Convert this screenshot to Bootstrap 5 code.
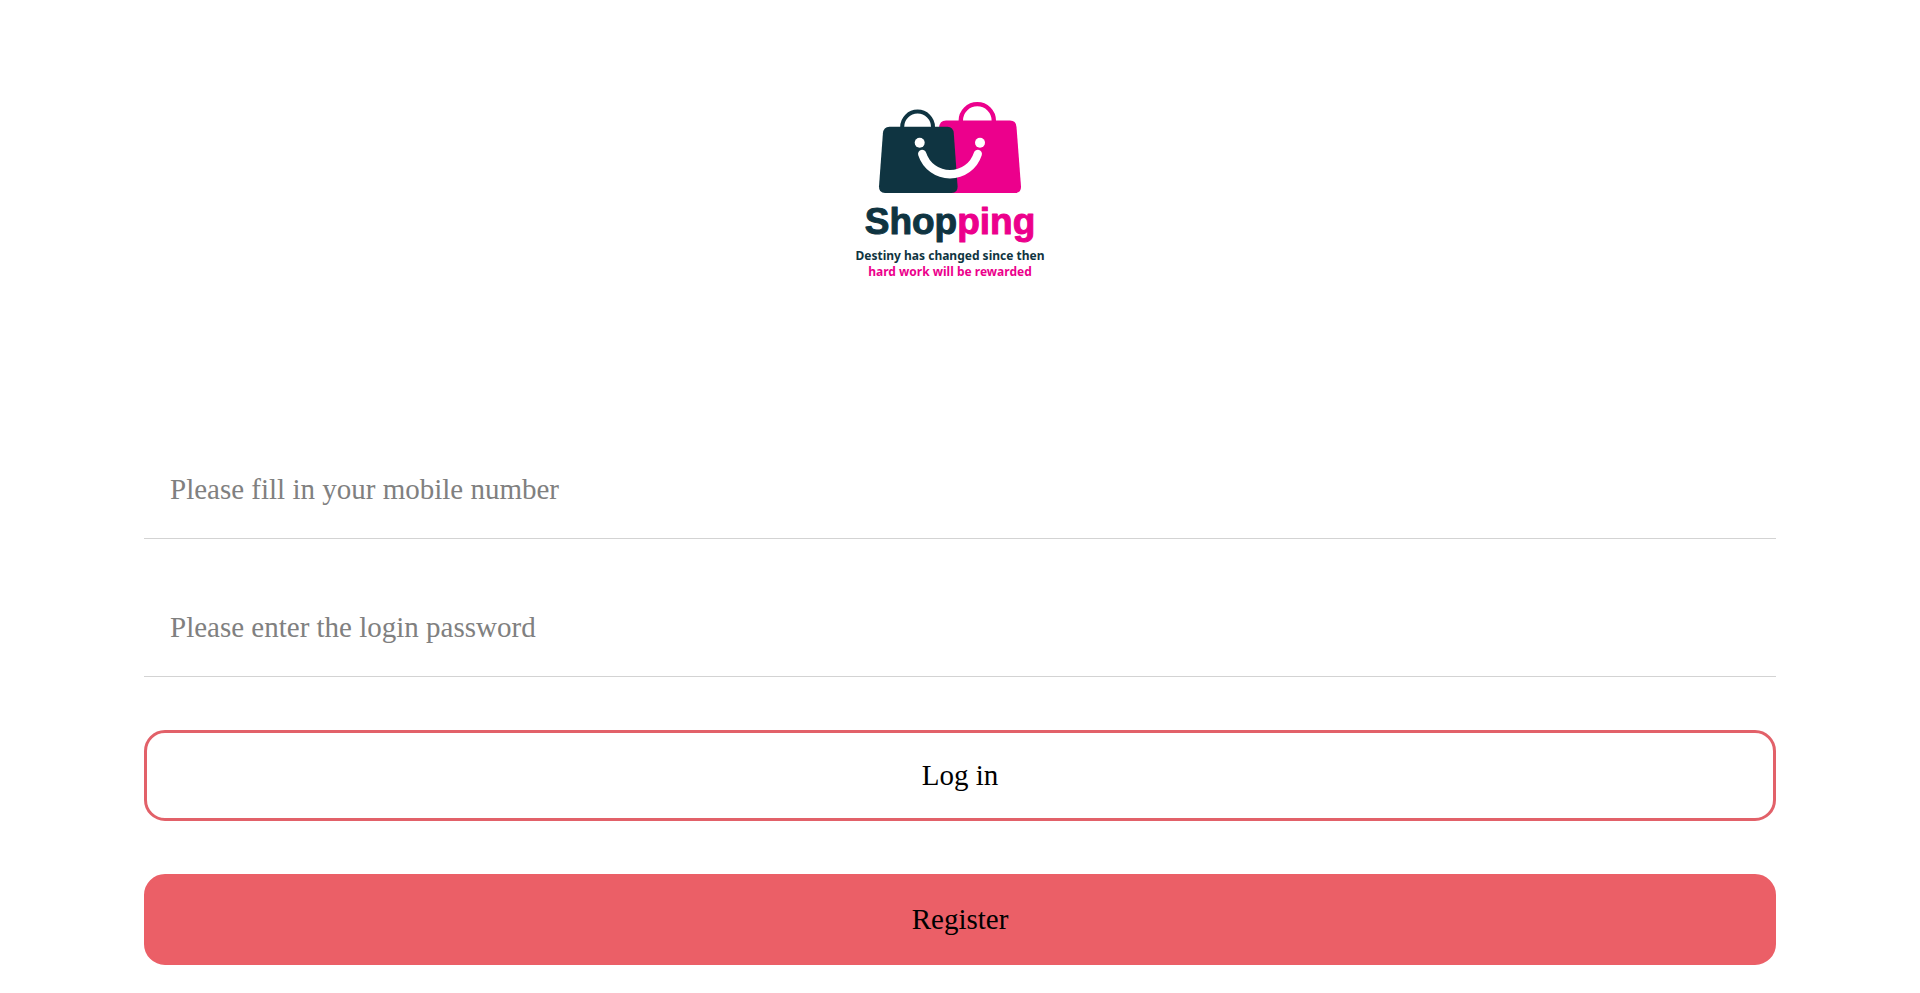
<!DOCTYPE html>
<html lang="en">
<head>
<meta charset="utf-8">
<meta name="viewport" content="width=device-width, initial-scale=1">
<title>Shopping - Log in</title>
<link href="https://cdn.jsdelivr.net/npm/bootstrap@5.3.0/dist/css/bootstrap.min.css" rel="stylesheet">
<style>
  body { background: #fff; color: #000; font-family: "Liberation Serif", "Times New Roman", serif; font-size: 29px; }
  .login-page { padding: 70px 7.5% 28px; }
  .brand-logo { width: 240px; height: 240px; margin-bottom: 130px; }
  .login-fields { gap: 39px; margin-bottom: 53px; }
  .login-actions { gap: 53px; }
  .line-input, .line-input:focus {
    height: 99px; padding: 0 26px; font-size: 29px; color: #000; background: transparent;
    border-bottom: 1px solid #d3d3d3 !important; box-shadow: none;
  }
  .line-input::placeholder { color: #808080; }
  .btn-block {
    --bs-btn-color: #000; --bs-btn-hover-color: #000; --bs-btn-active-color: #000;
    --bs-btn-font-size: 29px; --bs-btn-border-radius: 21px; --bs-btn-border-width: 3px;
    --bs-btn-border-color: #e26169; --bs-btn-hover-border-color: #e26169;
    height: 91px;
  }
  .btn-register { --bs-btn-bg: #eb5f67; --bs-btn-hover-bg: #e2555d; --bs-btn-border-color: #eb5f67; }
</style>
</head>
<body>
<main class="login-page d-flex flex-column">
  <svg class="brand-logo align-self-center" viewBox="840 70 240 240" role="img" aria-label="Shopping">
    <g fill="none">
      <path d="M960.8 122V120.6A16.5 16.5 0 0 1 993.8 120.6V122" stroke="#ec008c" stroke-width="4.4"/>
      <path d="M902.2 128V127A15.4 15.4 0 0 1 933 127V128" stroke="#0f3441" stroke-width="4"/>
    </g>
    <path fill="#ec008c" d="M946 120.600H1010Q1016 120.600 1016.500 127L1021 186.500Q1021.300 193 1015 193H945L939 128Q939.500 120.600 946 120.600Z"/>
    <path fill="#0f3441" d="M889.500 126.700H947.500Q953.300 126.700 953.800 133.500L957.600 186.500Q957.800 193 951.500 193H885Q878.800 193 879 186.500L882.900 133.500Q883.500 126.700 889.500 126.700Z"/>
    <g fill="#fff"><circle cx="919.700" cy="142.800" r="5"/><circle cx="980" cy="142.800" r="5"/></g>
    <path d="M922.200 154A29.200 29.200 0 0 0 977.800 154" fill="none" stroke="#fff" stroke-width="8.300" stroke-linecap="round"/>
    <text x="950" y="234" text-anchor="middle" font-family="'Liberation Sans', Arial, sans-serif" font-weight="700" font-size="37" stroke-width="1" stroke-linejoin="round" fill="#0f3441" stroke="#0f3441">Shop<tspan fill="#ec008c" stroke="#ec008c">ping</tspan></text>
    <g font-family="'Noto Sans', sans-serif" font-weight="700" font-size="12" text-anchor="middle">
      <text x="950" y="260" fill="#0f3441">Destiny has changed since then</text>
      <text x="950" y="276" fill="#ec008c">hard work will be rewarded</text>
    </g>
  </svg>
  <form onsubmit="return false">
    <div class="login-fields d-flex flex-column">
      <input class="form-control border-0 rounded-0 line-input" id="mobile" type="tel" aria-label="Mobile number" placeholder="Please fill in your mobile number">
      <input class="form-control border-0 rounded-0 line-input" id="password" type="password" aria-label="Login password" placeholder="Please enter the login password">
    </div>
    <div class="login-actions d-flex flex-column">
      <button class="btn btn-block w-100" type="submit">Log in</button>
      <button class="btn btn-block btn-register w-100" type="button">Register</button>
    </div>
  </form>
</main>
<script src="https://cdn.jsdelivr.net/npm/bootstrap@5.3.0/dist/js/bootstrap.bundle.min.js"></script>
</body>
</html>
